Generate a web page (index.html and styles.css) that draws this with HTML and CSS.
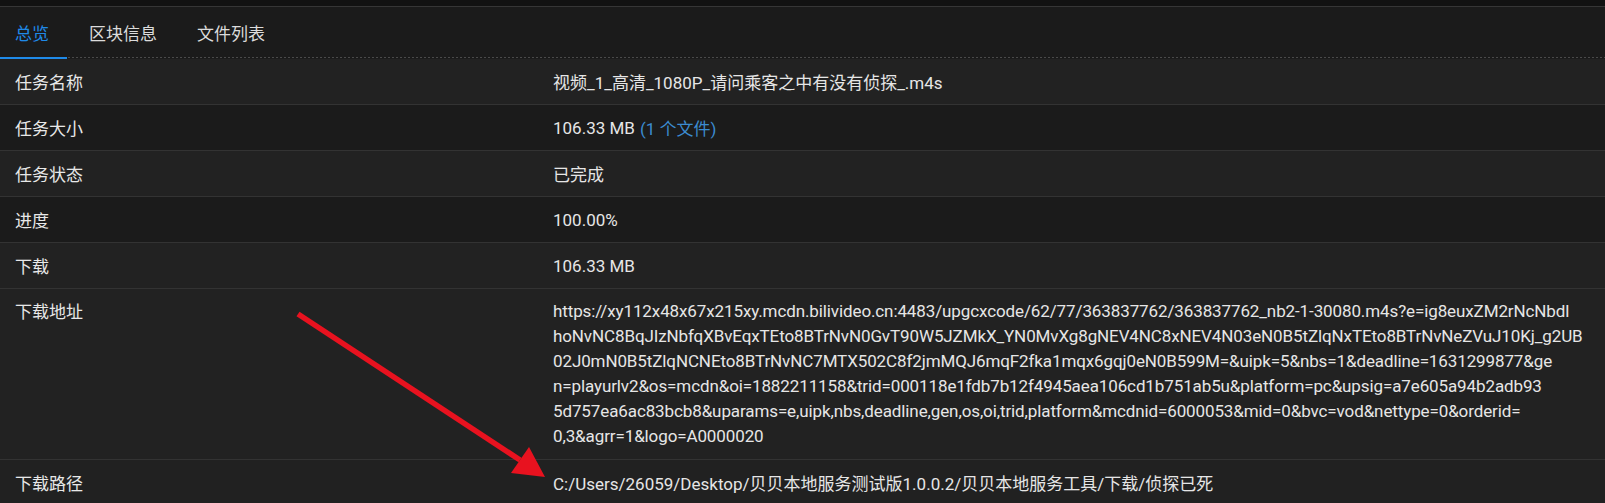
FILE: index.html
```html
<!DOCTYPE html>
<html lang="zh-CN">
<head>
<meta charset="utf-8">
<title>任务详情</title>
<link rel="stylesheet" href="styles.css">
</head>
<body>
<div class="page">
  <div class="topstrip"></div>
  <div class="tabs">
    <div class="tab active">总览</div>
    <div class="tab">区块信息</div>
    <div class="tab">文件列表</div>
  </div>
  <div class="table">
    <div class="row light">
      <div class="label">任务名称</div>
      <div class="value">视频_1_高清_1080P_请问乘客之中有没有侦探_.m4s</div>
    </div>
    <div class="row dark">
      <div class="label">任务大小</div>
      <div class="value">106.33 MB <span class="link">(1 个文件)</span></div>
    </div>
    <div class="row light">
      <div class="label">任务状态</div>
      <div class="value">已完成</div>
    </div>
    <div class="row dark">
      <div class="label">进度</div>
      <div class="value">100.00%</div>
    </div>
    <div class="row light">
      <div class="label">下载</div>
      <div class="value">106.33 MB</div>
    </div>
    <div class="row light tall">
      <div class="label">下载地址</div>
      <div class="value url">https://xy112x48x67x215xy.mcdn.bilivideo.cn:4483/upgcxcode/62/77/363837762/363837762_nb2-1-30080.m4s?e=ig8euxZM2rNcNbdl<br>hoNvNC8BqJIzNbfqXBvEqxTEto8BTrNvN0GvT90W5JZMkX_YN0MvXg8gNEV4NC8xNEV4N03eN0B5tZlqNxTEto8BTrNvNeZVuJ10Kj_g2UB<br>02J0mN0B5tZlqNCNEto8BTrNvNC7MTX502C8f2jmMQJ6mqF2fka1mqx6gqj0eN0B599M=&amp;uipk=5&amp;nbs=1&amp;deadline=1631299877&amp;ge<br>n=playurlv2&amp;os=mcdn&amp;oi=1882211158&amp;trid=000118e1fdb7b12f4945aea106cd1b751ab5u&amp;platform=pc&amp;upsig=a7e605a94b2adb93<br>5d757ea6ac83bcb8&amp;uparams=e,uipk,nbs,deadline,gen,os,oi,trid,platform&amp;mcdnid=6000053&amp;mid=0&amp;bvc=vod&amp;nettype=0&amp;orderid=<br>0,3&amp;agrr=1&amp;logo=A0000020</div>
    </div>
    <div class="row light2">
      <div class="label">下载路径</div>
      <div class="value">C:/Users/26059/Desktop/贝贝本地服务测试版1.0.0.2/贝贝本地服务工具/下载/侦探已死</div>
    </div>
  </div>
  <svg class="arrow" width="1605" height="503" viewBox="0 0 1605 503" aria-hidden="true">
    <line x1="298" y1="314" x2="520" y2="460" stroke="#e8121f" stroke-width="5.5"/>
    <polygon points="545,477 511,473 529,447" fill="#e8121f"/>
  </svg>
</div>
</body>
</html>
```

FILE: styles.css
```css
html, body {
  margin: 0;
  padding: 0;
}
body {
  background: #1c1c1c;
  color: #e6e6e6;
  font-family: Roboto, "Noto Sans CJK SC", sans-serif;
  font-size: 17px;
  overflow: hidden;
}
.page {
  position: relative;
  width: 1605px;
  height: 503px;
  overflow: hidden;
}
.topstrip {
  height: 6px;
  background: #121212;
  border-bottom: 1px solid #363636;
}
.tabs {
  display: flex;
  height: 52px;
  background:
    repeating-linear-gradient(90deg, #4a4a4a 0 2px, transparent 2px 4px) 0 50px / 100% 1px no-repeat,
    #1b1b1b;
}
.tab {
  box-sizing: border-box;
  height: 52px;
  padding: 0 18px 0 22px;
  display: flex;
  align-items: center;
  color: #dcdcdc;
  border-bottom: 2px solid transparent;
}
.tab:first-child {
  padding-left: 15px;
}
.tab.active {
  color: #1f8ae8;
  border-bottom-color: #1f8ae8;
}
.table {
  display: flex;
  flex-direction: column;
}
.row {
  display: grid;
  grid-template-columns: 553px 1fr;
  min-height: 45px;
  border-bottom: 1px solid #333333;
}
.row.light { background: #222222; }
.row.light2 { background: #212121; }
.row.dark { background: #1b1b1b; }
.label {
  padding-left: 15px;
  display: flex;
  align-items: center;
  color: #e8e8e8;
}
.value {
  display: flex;
  align-items: center;
  padding-right: 13px;
  white-space: nowrap;
}
.row.tall .label {
  align-items: flex-start;
  padding-top: 11px;
  line-height: 25px;
}
.value.url {
  display: block;
  padding-top: 10px;
  padding-bottom: 10px;
  line-height: 25px;
  letter-spacing: -0.11px;
}
.link {
  color: #3b8bd0;
  margin-left: 5px;
}
.arrow {
  position: absolute;
  left: 0;
  top: 0;
  pointer-events: none;
}
```
